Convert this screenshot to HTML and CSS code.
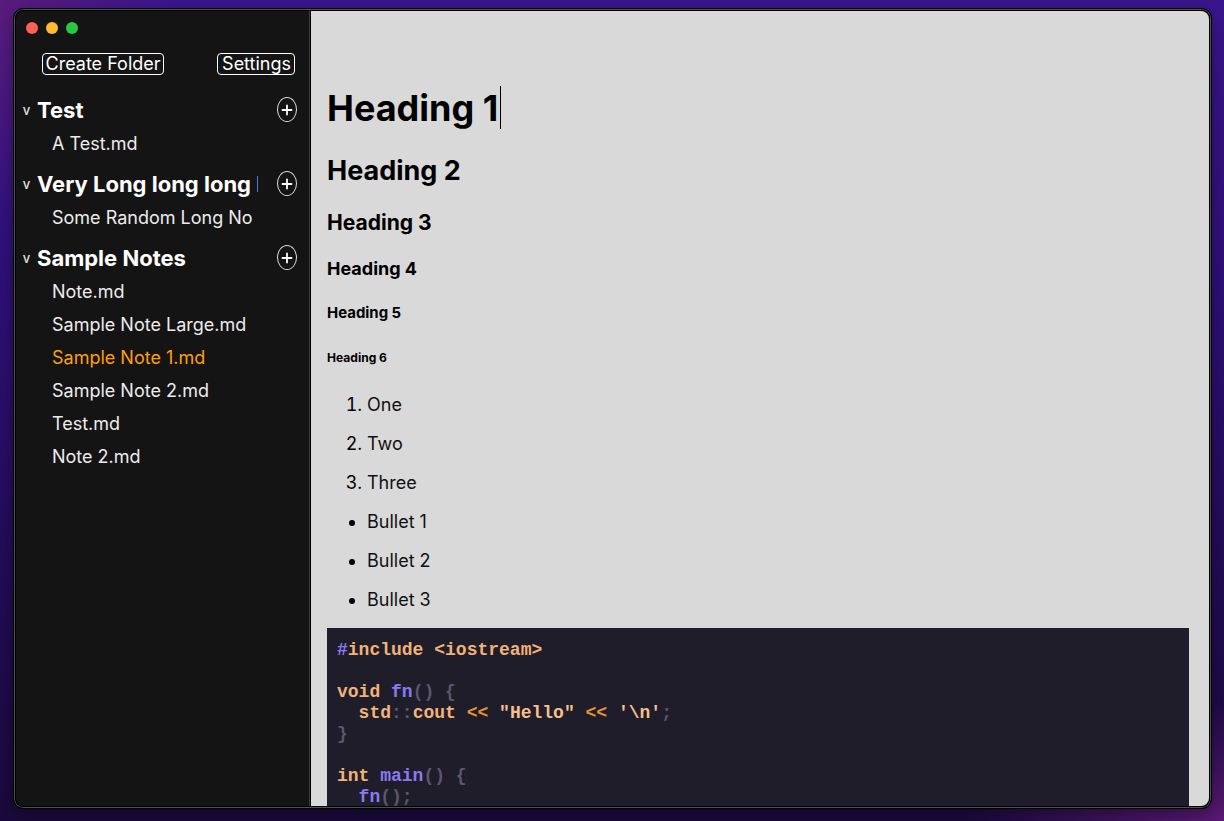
FILE: index.html
```html
<!DOCTYPE html>
<html lang="en">
<head>
<meta charset="utf-8">
<title>Notes</title>
<link rel="stylesheet" href="styles.css">
</head>
<body>
<div class="desktop">
  <div class="window">
    <aside class="sidebar">
      <div class="lights">
        <span class="light red"></span>
        <span class="light yellow"></span>
        <span class="light green"></span>
      </div>
      <div class="actions">
        <button class="btn">Create Folder</button>
        <button class="btn btn-wide">Settings</button>
      </div>
      <div class="folders">
        <section class="folder">
          <div class="folder-head">
            <span class="chev">v</span>
            <span class="folder-name">Test</span>
            <button class="add"><svg width="12" height="12" viewBox="0 0 12 12"><path d="M6 1.5v9M1.5 6h9" stroke="#fff" stroke-width="1.8" stroke-linecap="round"/></svg></button>
          </div>
          <ul class="notes">
            <li class="note">A Test.md</li>
          </ul>
        </section>
        <section class="folder">
          <div class="folder-head">
            <span class="chev">v</span>
            <span class="folder-name">Very Long long long long Folder</span>
            <button class="add"><svg width="12" height="12" viewBox="0 0 12 12"><path d="M6 1.5v9M1.5 6h9" stroke="#fff" stroke-width="1.8" stroke-linecap="round"/></svg></button>
          </div>
          <ul class="notes">
            <li class="note">Some Random Long Note.md</li>
          </ul>
        </section>
        <section class="folder">
          <div class="folder-head">
            <span class="chev">v</span>
            <span class="folder-name">Sample Notes</span>
            <button class="add"><svg width="12" height="12" viewBox="0 0 12 12"><path d="M6 1.5v9M1.5 6h9" stroke="#fff" stroke-width="1.8" stroke-linecap="round"/></svg></button>
          </div>
          <ul class="notes">
            <li class="note">Note.md</li>
            <li class="note">Sample Note Large.md</li>
            <li class="note active">Sample Note 1.md</li>
            <li class="note">Sample Note 2.md</li>
            <li class="note">Test.md</li>
            <li class="note">Note 2.md</li>
          </ul>
        </section>
      </div>
    </aside>
    <main class="editor">
      <h1>Heading 1<span class="caret"></span></h1>
      <h2>Heading 2</h2>
      <h3>Heading 3</h3>
      <h4>Heading 4</h4>
      <h5>Heading 5</h5>
      <h6>Heading 6</h6>
      <ol>
        <li><p>One</p></li>
        <li><p>Two</p></li>
        <li><p>Three</p></li>
      </ol>
      <ul>
        <li><p>Bullet 1</p></li>
        <li><p>Bullet 2</p></li>
        <li><p>Bullet 3</p></li>
      </ul>
<pre class="code"><code><span class="k-fn">#</span><span class="k-ty">include &lt;iostream&gt;</span>

<span class="k-ty">void</span> <span class="k-fn">fn</span><span class="k-p">() {</span>
  <span class="k-ty">std</span><span class="k-p">::</span><span class="k-ty">cout</span> <span class="k-op">&lt;&lt;</span> <span class="k-str">"Hello"</span> <span class="k-op">&lt;&lt;</span> <span class="k-str">'\n'</span><span class="k-p">;</span>
<span class="k-p">}</span>

<span class="k-ty">int</span> <span class="k-fn">main</span><span class="k-p">() {</span>
  <span class="k-fn">fn</span><span class="k-p">();</span>
  <span class="k-ty">return</span> <span class="k-num">0</span><span class="k-p">;</span>
<span class="k-p">}</span></code></pre>
    </main>
  </div>
</div>
</body>
</html>
```

FILE: styles.css
```css
html, body {
  margin: 0;
  padding: 0;
  height: 821px;
  overflow: hidden;
}

body {
  font-family: Inter, "Noto Sans", sans-serif;
  background:
    radial-gradient(ellipse 260px 120px at 100% 100%, #5a1a76 0%, rgba(90, 26, 118, 0) 100%),
    radial-gradient(ellipse 180px 220px at 0 0, #5a1c7c 0%, rgba(90, 28, 124, 0) 100%),
    linear-gradient(180deg, #3a168e 0%, #2e1078 35%, #220c56 70%, #1a0a3c 100%);
}

.desktop {
  padding: 8px 0 0 13px;
}

.window {
  box-sizing: border-box;
  width: 1199px;
  height: 801px;
  border: 1px solid #000;
  border-radius: 10px;
  padding: 2px;
  background: #000;
  box-shadow: inset 0 0 0 1px #505050, 0 6px 18px rgba(0, 0, 0, 0.35);
  display: flex;
  overflow: hidden;
}

/* Sidebar */
.sidebar {
  box-sizing: border-box;
  width: 294px;
  flex: none;
  background: #141414;
  border-right: 1px solid #3c3c3c;
  border-radius: 8px 0 0 8px;
  padding-top: 11px;
  color: #fff;
  overflow: hidden;
}

.lights {
  display: flex;
  gap: 8px;
  padding-left: 10px;
}

.light {
  width: 12px;
  height: 12px;
  border-radius: 50%;
}

.red { background: #fe5f57; }
.yellow { background: #febc2e; }
.green { background: #28c840; }

.actions {
  display: flex;
  justify-content: space-between;
  margin-top: 19px;
  padding: 0 14px 0 26px;
}

.btn {
  box-sizing: border-box;
  height: 22px;
  border: 1px solid #fff;
  border-radius: 4px;
  background: transparent;
  color: #fff;
  font-family: Inter, "Noto Sans", sans-serif;
  font-size: 18px;
  line-height: 20px;
  padding: 0 2px 0 2.5px;
  margin: 0;
}

.btn-wide {
  padding: 0 3px 0 4px;
}

.folders {
  margin-top: 18px;
}

.folder {
  margin-top: 8px;
}

.folder-head {
  display: flex;
  align-items: center;
  height: 33px;
  padding: 0 12px 0 6px;
}

.chev {
  width: 9px;
  margin-right: 6px;
  padding-top: 2px;
  font-size: 13px;
  font-weight: 500;
  color: #e0e0e0;
  line-height: 13px;
  text-align: center;
}

.folder-name {
  flex: 1;
  min-width: 0;
  overflow: hidden;
  white-space: nowrap;
  font-size: 22px;
  font-weight: 700;
  color: #fff;
}

.add {
  box-sizing: border-box;
  flex: none;
  width: 20px;
  height: 25px;
  margin-left: 19px;
  padding: 0;
  border: 1px solid #dcdcdc;
  border-radius: 50%;
  background: transparent;
  display: flex;
  align-items: center;
  justify-content: center;
}

.add svg {
  display: block;
}

.notes {
  list-style: none;
  margin: 0;
  padding: 1px 57px 0 36px;
}

.note {
  font-size: 18px;
  line-height: 33px;
  color: #ececec;
  white-space: nowrap;
  overflow: hidden;
}

.note.active {
  color: #ff9f0a;
}

.folder + .folder {
  margin-top: 7px;
}

/* Editor */
.editor {
  flex: 1;
  min-width: 0;
  background: #d9d9d9;
  border-left: 1px solid #000;
  border-radius: 0 8px 8px 0;
  padding: 51px 20px 0 16px;
  font-size: 18px;
  color: #000;
  overflow: hidden;
}

.editor h1 {
  margin-top: 24px;
}

.caret {
  display: inline-block;
  width: 1px;
  height: 43px;
  margin-left: 2px;
  background: #000;
  vertical-align: top;
}

.editor ol,
.editor ul {
  padding-left: 40px;
  margin: 18px 0;
}

.editor li p {
  margin: 18px 0;
  line-height: 21px;
  color: #111;
}

.code {
  margin: 18px 0;
  padding: 12px 10px 10px;
  background: #1f1d29;
  font-family: "Liberation Mono", "DejaVu Sans Mono", monospace;
  font-weight: 700;
  font-size: 18px;
  line-height: 21px;
  color: #f2b27a;
  white-space: pre;
}

.code code {
  font: inherit;
}

.k-fn { color: #8a7af2; }
.k-ty { color: #f2b27a; }
.k-p { color: #5a576e; }
.k-op { color: #e6923a; }
.k-str { color: #f4c08e; }
.k-num { color: #e6923a; }
```
